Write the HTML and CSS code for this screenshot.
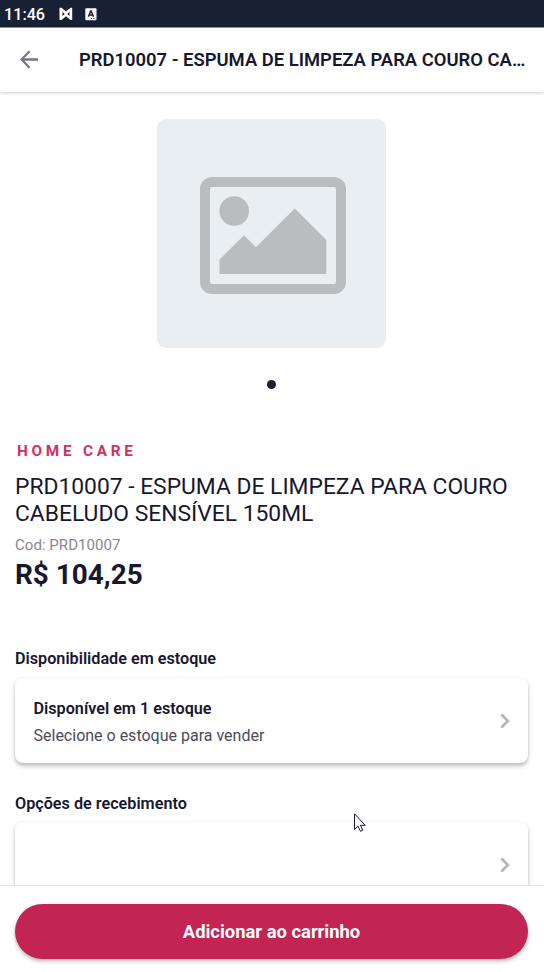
FILE: index.html
```html
<!DOCTYPE html>
<html lang="pt-BR">
<head>
<meta charset="utf-8">
<title>Produto</title>
<link rel="stylesheet" href="styles.css">
</head>
<body>
<div class="screen">
  <div class="status">
    <span class="clock">11:46</span>
    <svg class="status-icon" width="14" height="14" viewBox="0 0 14 14"><path d="M.5.8H2.5L7 4.4 11.5.8H13.2V12.9H11.5L7 9.2 2.5 12.9H.5Z" fill="#fff"/><path d="M3.4 5 5.8 7 3.4 9ZM10.5 5 8.2 7l2.3 2Z" fill="#182034"/></svg>
    <svg class="status-icon second" width="12" height="13" viewBox="0 0 12 13"><rect x=".3" y=".3" width="11.2" height="12" rx="1" fill="#fff"/><path d="M3.4 8.8 5.7 3h.5l2.3 5.8M4.2 7h3.4" fill="none" stroke="#182034" stroke-width="1.4"/><path d="M6 10.6h1M8 10.6h1.4" stroke="#182034" stroke-width=".8"/></svg>
  </div>
  <header class="appbar">
    <svg class="back" width="18" height="19" viewBox="0 0 18 19"><path d="M18 9.5H1.8M9.6 1.2 1.5 9.5l8.1 8.3" fill="none" stroke="#777783" stroke-width="2.3"/></svg>
    <h1 class="appbar-title">PRD10007 - ESPUMA DE LIMPEZA PARA COURO CA…</h1>
  </header>
  <main class="content">
    <div class="photo">
      <svg width="146" height="117" viewBox="0 0 146 117" fill="#b9bdc0"><rect x="5" y="5" width="136" height="107" rx="7" fill="none" stroke="#b9bdc0" stroke-width="10"/><circle cx="34.2" cy="34" r="14.8"/><path d="M19.5 82.5 44 58.2 56 70.2 94.7 31.5 126.3 63V97H19.5Z"/></svg>
    </div>
    <div class="dot"></div>
    <section class="product">
      <div class="category">HOME CARE</div>
      <h2 class="name">PRD10007 - ESPUMA DE LIMPEZA PARA COURO CABELUDO SENSÍVEL 150ML</h2>
      <div class="code">Cod: PRD10007</div>
      <div class="price">R$ 104,25</div>
    </section>
    <h3 class="label">Disponibilidade em estoque</h3>
    <div class="card">
      <div class="card-text">
        <div class="card-title">Disponível em 1 estoque</div>
        <div class="card-sub">Selecione o estoque para vender</div>
      </div>
      <svg class="chevron" width="10" height="16" viewBox="0 0 10 16"><path d="m2.2 2.2 5.6 5.8-5.6 5.8" fill="none" stroke="#b6b6bb" stroke-width="2.8" stroke-linecap="round" stroke-linejoin="miter"/></svg>
    </div>
    <h3 class="label next">Opções de recebimento</h3>
    <div class="card">
      <svg class="chevron" width="10" height="16" viewBox="0 0 10 16"><path d="m2.2 2.2 5.6 5.8-5.6 5.8" fill="none" stroke="#b6b6bb" stroke-width="2.8" stroke-linecap="round" stroke-linejoin="miter"/></svg>
    </div>
  </main>
  <footer class="footer">
    <button class="add">Adicionar ao carrinho</button>
  </footer>
  <svg class="cursor" width="12" height="20" viewBox="0 0 12 20"><path d="M.5.8V16.5L4 13.2 6.5 18.3 8.7 17.3 6.5 12.3H11.3Z" fill="#fff" stroke="#15152d" stroke-width="1"/></svg>
</div>
</body>
</html>
```

FILE: styles.css
```css
* { box-sizing: border-box; }
body { margin: 0; font-family: Roboto, "Liberation Sans", sans-serif; color: #17172f; background: #fff; }
h1, h2, h3 { margin: 0; }
svg { display: block; flex: none; }
.screen { position: relative; display: flex; flex-direction: column; width: 544px; height: 972px; overflow: hidden; }
.status { flex: none; display: flex; align-items: center; height: 27px; padding: 1px 4px 0; background: #182034; color: #fff; }
.clock { width: 55px; padding-top: 1px; font-size: 16.2px; font-weight: 500; line-height: 26px; }
.second { margin-left: 12px; }
.appbar { flex: none; display: flex; align-items: center; height: 65px; padding: 0 10px 0 20px; border-top: 1px solid #8b8f99; box-shadow: 0 1px 3px rgba(0, 0, 0, .2); z-index: 1; }
.back { margin-top: -1px; }
.appbar-title { flex: 1; min-width: 0; margin-left: 41px; white-space: nowrap; font-size: 18.43px; font-weight: 600; line-height: 28px; }
.content { flex: 1; min-height: 0; overflow: hidden; display: flex; flex-direction: column; padding: 27px 16px 0 15px; }
.photo { flex: none; align-self: center; display: flex; align-items: center; justify-content: center; width: 229px; height: 229px; padding: 4px 0 0 2px; border-radius: 9px; background: #e8eef1; }
.dot { flex: none; align-self: center; width: 9px; height: 9px; margin-top: 32px; border-radius: 50%; background: #182034; }
.product { flex: none; margin-top: 52px; }
.category { margin-left: 2px; color: #d13161; font-size: 15.3px; font-weight: 700; letter-spacing: 3.75px; line-height: 20px; }
.name { margin-top: 12px; font-size: 22.82px; font-weight: 400; line-height: 27px; }
.code { margin-top: 8px; color: #888890; font-size: 15.1px; line-height: 20px; }
.price { margin-top: 2px; font-size: 27.9px; font-weight: 700; line-height: 36px; }
.label { flex: none; margin-top: 56px; font-size: 16.2px; font-weight: 600; line-height: 20px; }
.label.next { margin-top: 31px; margin-bottom: -1px; }
.card { flex: none; display: flex; align-items: center; height: 85px; margin-top: 9px; padding: 0 18px; border-radius: 8px; background: #fff; box-shadow: 0 3px 4px rgba(0, 0, 0, .25), 0 0 2px rgba(0, 0, 0, .1); }
.card-text { padding: 3px 0 0 .5px; }
.card-title { font-size: 16.2px; font-weight: 600; line-height: 26px; }
.card-sub { color: #4b4b5b; font-size: 16px; line-height: 27px; }
.chevron { margin-left: auto; }
.footer { flex: none; height: 87px; padding: 18px 16px 13px 15px; border-top: 1px solid #e6e6e6; background: #fff; z-index: 1; }
.add { display: block; width: 100%; height: 55px; border: 0; border-radius: 28px; background: #c22553; color: #fff; font-family: inherit; font-size: 18.4px; font-weight: 700; padding: 0 6px 1px; box-shadow: 0 2px 4px rgba(0, 0, 0, .3); }
.cursor { position: absolute; left: 354px; top: 813px; z-index: 2; }
```
